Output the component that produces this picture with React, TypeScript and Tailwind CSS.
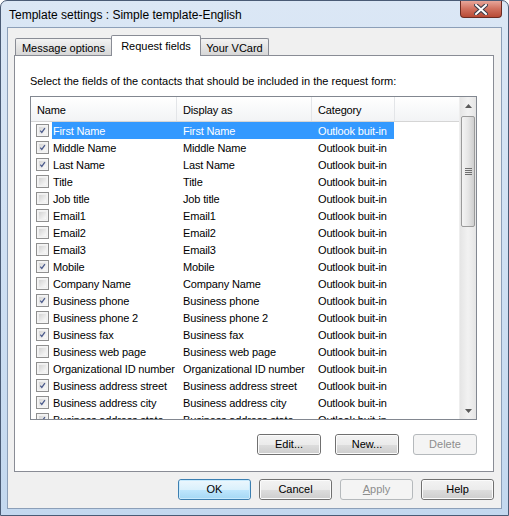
import React from "react";

const rows: [string, boolean][] = [
  ["First Name", true],
  ["Middle Name", true],
  ["Last Name", true],
  ["Title", false],
  ["Job title", false],
  ["Email1", false],
  ["Email2", false],
  ["Email3", false],
  ["Mobile", true],
  ["Company Name", false],
  ["Business phone", true],
  ["Business phone 2", false],
  ["Business fax", true],
  ["Business web page", false],
  ["Organizational ID number", false],
  ["Business address street", true],
  ["Business address city", true],
  ["Business address state", true],
];

function Check({ on }: { on: boolean }) {
  return (
    <div className="w-[13px] h-[13px] border border-[#8f8f8f] bg-[#f4f4f4] p-[1px] flex">
      <div className="flex-1 bg-gradient-to-br from-[#d4d4d4] to-[#fafafa] border border-[#f0f0f0] relative">
        {on && (
          <svg viewBox="0 0 9 9" className="absolute inset-0 w-full h-full">
            <path d="M1.6 4.6 L3.6 7 L7.6 1.4" fill="none" stroke="#4a5a8c" strokeWidth="1.6" />
          </svg>
        )}
      </div>
    </div>
  );
}

function Btn({
  children,
  w,
  kind = "normal",
}: {
  children: React.ReactNode;
  w: string;
  kind?: "normal" | "default" | "disabled";
}) {
  const base = "h-[21px] rounded-[3px] border flex items-center justify-center text-[11px] relative overflow-hidden";
  if (kind === "disabled")
    return (
      <div className={`${base} ${w} border-[#b5b9bc] bg-[#f4f4f4] text-[#8d8d8d]`}>{children}</div>
    );
  if (kind === "default")
    return (
      <div className={`${base} ${w} border-[#3c7fb1] text-black`}>
        <div className="absolute inset-0 flex flex-col border border-[#c8eafd] rounded-[2px]">
          <div className="flex-1 bg-gradient-to-b from-[#eaf6fd] to-[#d9f0fc]" />
          <div className="flex-1 bg-gradient-to-b from-[#bee6fd] to-[#a7d9f5]" />
        </div>
        <span className="relative">{children}</span>
      </div>
    );
  return (
    <div className={`${base} ${w} border-[#707070] text-black`}>
      <div className="absolute inset-0 flex flex-col border border-[#fbfbfb] rounded-[2px]">
        <div className="flex-1 bg-gradient-to-b from-[#f2f2f2] to-[#ebebeb]" />
        <div className="flex-1 bg-gradient-to-b from-[#dddddd] to-[#cfcfcf]" />
      </div>
      <span className="relative">{children}</span>
    </div>
  );
}

export default function App() {
  return (
    <div
      className="w-[509px] h-[516px] bg-white"
      style={{ fontFamily: '"Liberation Sans", Arial, sans-serif' }}
    >
      <div className="w-[509px] h-[516px] relative flex flex-col border border-[#4a5b75] rounded-t-[7px] bg-gradient-to-b from-[#dbe7f5] via-[#cfe0f3] to-[#c3d8ef]">
        {/* title bar */}
        <div className="h-[26px] flex items-center pl-[8px] pt-[1px] text-[12px] text-black">
          Template settings : Simple template-English
        </div>
        {/* close button */}
        <div className="absolute right-[6px] top-0 w-[42px] h-[17px] rounded-b-[4px] border border-t-0 border-[#6b2b22] bg-gradient-to-b from-[#e7a69a] via-[#d0705e] to-[#b84a35] flex items-center justify-center">
          <svg width="14" height="11" viewBox="0 0 14 11">
            <path d="M2 1 L12 10 M12 1 L2 10" stroke="#3b3b48" strokeWidth="4" strokeLinecap="square" />
            <path d="M2 1 L12 10 M12 1 L2 10" stroke="#ffffff" strokeWidth="2" strokeLinecap="square" />
          </svg>
        </div>
        {/* client area */}
        <div className="ml-[6px] mr-[6px] h-[482px] border border-[#8c9fb8] bg-[#f0f0f0] flex flex-col">
          {/* tabs */}
          <div className="h-[27px] pt-[6px] pl-[6px] flex items-end">
            <div className="ml-[1px] h-[18px] w-[97px] border border-b-0 border-[#898c95] rounded-t-[2px] bg-gradient-to-b from-[#f3f3f3] to-[#d5d5d5] flex items-center justify-center text-[11px] -mb-[1px] pt-[1px]">
              Message options
            </div>
            <div className="relative z-10 h-[21px] w-[90px] border border-b-0 border-[#898c95] rounded-t-[2px] bg-white flex items-start justify-center text-[11px] -mb-[1px] pt-[2px] -ml-[1px]">
              Request fields
            </div>
            <div className="h-[18px] w-[69px] border border-b-0 border-[#898c95] rounded-t-[2px] bg-gradient-to-b from-[#f3f3f3] to-[#d5d5d5] flex items-center justify-center text-[11px] -mb-[1px] pt-[1px] -ml-[1px]">
              Your VCard
            </div>
          </div>
          {/* panel */}
          <div className="ml-[6px] w-[480px] h-[417px] border border-[#898c95] bg-white flex flex-col pl-[15px]">
            <div className="h-[40px] pt-[18px] text-[11px] text-black leading-[14px]">
              Select the fields of the contacts that should be included in the request form:
            </div>
            <div className="w-[447px] h-[324px] border border-[#828790] flex text-[11px] tracking-[-0.15px]">
              <div className="w-[428px] flex flex-col overflow-hidden">
                <div className="h-[25px] flex border-b border-[#d5d5d5] bg-gradient-to-b from-white to-[#f2f3f5] shrink-0">
                  <div className="w-[146px] border-r border-[#e3e5e8] flex items-center pl-[6px] pt-[2px]">Name</div>
                  <div className="w-[135px] border-r border-[#e3e5e8] flex items-center pl-[6px] pt-[2px]">Display as</div>
                  <div className="w-[83px] border-r border-[#e3e5e8] flex items-center pl-[6px] pt-[2px]">Category</div>
                  <div className="flex-1" />
                </div>
                {rows.map(([name, on], i) => {
                  const sel = i === 0;
                  return (
                    <div key={name} className="h-[17px] flex items-center shrink-0">
                      <div className="w-[21px] pl-[5px] flex items-center">
                        <Check on={on} />
                      </div>
                      <div
                        className={`h-[17px] w-[342px] flex items-center pt-[1px] ${sel ? "bg-[#3399ff] text-white" : "text-black"}`}
                      >
                        <span className="w-[125px] pl-[1px] whitespace-nowrap overflow-hidden">{name}</span>
                        <span className="w-[135px] pl-[6px] whitespace-nowrap overflow-hidden">{name}</span>
                        <span className="w-[82px] pl-[6px] whitespace-nowrap overflow-hidden">Outlook buit-in</span>
                      </div>
                    </div>
                  );
                })}
              </div>
              {/* scrollbar */}
              <div className="w-[17px] flex flex-col bg-gradient-to-r from-[#e5e5e5] via-[#f2f2f2] to-[#e5e5e5] border-l border-[#eeeeee]">
                <div className="h-[17px] flex items-center justify-center">
                  <svg width="7" height="4" viewBox="0 0 7 4">
                    <path d="M0 4 L3.5 0 L7 4 Z" fill="#5a5a5a" />
                  </svg>
                </div>
                <div className="mx-[1px] mt-[2px] h-[111px] rounded-[2px] border border-[#9a9a9a] bg-gradient-to-r from-[#f4f4f4] via-[#e6e6e6] to-[#cfcfcf] flex items-center justify-center">
                  <div className="flex flex-col gap-[1px]">
                    <div className="w-[7px] h-[1px] bg-[#6f6f6f]" />
                    <div className="w-[7px] h-[1px] bg-[#6f6f6f]" />
                    <div className="w-[7px] h-[1px] bg-[#6f6f6f]" />
                    <div className="w-[7px] h-[1px] bg-[#6f6f6f]" />
                  </div>
                </div>
                <div className="flex-1" />
                <div className="h-[17px] flex items-center justify-center">
                  <svg width="7" height="4" viewBox="0 0 7 4">
                    <path d="M0 0 L3.5 4 L7 0 Z" fill="#5a5a5a" />
                  </svg>
                </div>
              </div>
            </div>
            <div className="w-[447px] mt-[14px] flex justify-end gap-[14px]">
              <Btn w="w-[64px]">Edit...</Btn>
              <Btn w="w-[64px]">New...</Btn>
              <Btn w="w-[64px]" kind="disabled">Delete</Btn>
            </div>
          </div>
          {/* bottom buttons */}
          <div className="mt-[7px] pl-[170px] flex gap-[8px]">
            <Btn w="w-[73px]" kind="default">OK</Btn>
            <Btn w="w-[73px]">Cancel</Btn>
            <Btn w="w-[73px]" kind="disabled">
              <span className="underline">A</span>pply
            </Btn>
            <Btn w="w-[73px]">Help</Btn>
          </div>
        </div>
      </div>
    </div>
  );
}
